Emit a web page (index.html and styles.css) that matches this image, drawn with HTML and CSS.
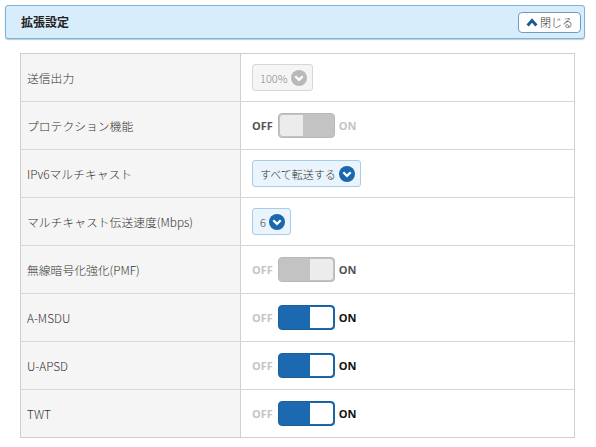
FILE: index.html
```html
<!DOCTYPE html>
<html lang="ja">
<head>
<meta charset="utf-8">
<title>拡張設定</title>
<link rel="stylesheet" href="styles.css">
</head>
<body>
<div class="header">
  <h1 class="title">拡張設定</h1>
  <button class="close-btn" type="button">
    <svg class="close-icon" width="12" height="9" viewBox="0 0 12 9"><polyline points="1.6,7.6 6,2.6 10.4,7.6" fill="none" stroke="#1e5a92" stroke-width="3" stroke-linejoin="miter"/></svg>
    <span>閉じる</span>
  </button>
</div>

<div class="settings">
  <div class="row">
    <div class="label">送信出力</div>
    <div class="value">
      <div class="select disabled"><span>100%</span>
        <svg class="chev" width="16" height="16" viewBox="0 0 16 16"><circle cx="8" cy="8" r="8" fill="#b9b9b9"/><polyline points="4.3,6.3 8,9.9 11.7,6.3" fill="none" stroke="#fff" stroke-width="2.3"/></svg>
      </div>
    </div>
  </div>
  <div class="row">
    <div class="label">プロテクション機能</div>
    <div class="value">
      <span class="tog-label strong">OFF</span>
      <div class="toggle off disabled"><span class="knob"></span></div>
      <span class="tog-label faint">ON</span>
    </div>
  </div>
  <div class="row">
    <div class="label">IPv6マルチキャスト</div>
    <div class="value">
      <div class="select"><span>すべて転送する</span>
        <svg class="chev" width="16" height="16" viewBox="0 0 16 16"><circle cx="8" cy="8" r="8" fill="#1b67ad"/><polyline points="4.3,6.3 8,9.9 11.7,6.3" fill="none" stroke="#fff" stroke-width="2.3"/></svg>
      </div>
    </div>
  </div>
  <div class="row">
    <div class="label">マルチキャスト伝送速度(Mbps)</div>
    <div class="value">
      <div class="select"><span>6</span>
        <svg class="chev" width="16" height="16" viewBox="0 0 16 16"><circle cx="8" cy="8" r="8" fill="#1b67ad"/><polyline points="4.3,6.3 8,9.9 11.7,6.3" fill="none" stroke="#fff" stroke-width="2.3"/></svg>
      </div>
    </div>
  </div>
  <div class="row">
    <div class="label">無線暗号化強化(PMF)</div>
    <div class="value">
      <span class="tog-label faint">OFF</span>
      <div class="toggle on disabled"><span class="knob"></span></div>
      <span class="tog-label strong">ON</span>
    </div>
  </div>
  <div class="row">
    <div class="label">A-MSDU</div>
    <div class="value">
      <span class="tog-label faint">OFF</span>
      <div class="toggle on"><span class="knob"></span></div>
      <span class="tog-label dark">ON</span>
    </div>
  </div>
  <div class="row">
    <div class="label">U-APSD</div>
    <div class="value">
      <span class="tog-label faint">OFF</span>
      <div class="toggle on"><span class="knob"></span></div>
      <span class="tog-label dark">ON</span>
    </div>
  </div>
  <div class="row">
    <div class="label">TWT</div>
    <div class="value">
      <span class="tog-label faint">OFF</span>
      <div class="toggle on"><span class="knob"></span></div>
      <span class="tog-label dark">ON</span>
    </div>
  </div>
</div>
</body>
</html>
```

FILE: styles.css
```css
* { box-sizing: border-box; }
html, body { margin: 0; padding: 0; background: #fff; }
body {
  font-family: "Noto Sans CJK JP", "Open Sans", sans-serif;
  font-size: 12px;
  color: #333;
  padding: 5px 11px 0 5px;
}

.header {
  height: 34px;
  background: #d8edfb;
  border: 1px solid #7fb3da;
  border-radius: 3px;
  box-shadow: 0 1px 1px rgba(60,110,160,0.35);
  display: flex;
  align-items: center;
  justify-content: space-between;
  padding: 0 3px 0 15px;
}
.title {
  margin: 0;
  font-size: 12px;
  font-weight: bold;
  color: #222;
  line-height: 1;
}
.close-btn {
  height: 21px;
  width: 63px;
  background: #fff;
  border: 1px solid #6d9dc4;
  border-radius: 4px;
  display: flex;
  align-items: center;
  justify-content: center;
  gap: 2px;
  padding: 0;
  font-family: "Noto Sans CJK JP", sans-serif;
  font-size: 11px;
  font-weight: 300;
  color: #333;
}
.close-icon { display: block; }

.settings {
  margin: 14px 0 0 15px;
  width: 555px;
  border: 1px solid #cfcfcf;
}
.row {
  display: grid;
  grid-template-columns: 220px 1fr;
  height: 48px;
  border-top: 1px solid #d6d6d6;
}
.row:first-child { border-top: 0; height: 47px; }
.label {
  background: #f5f5f5;
  border-right: 1px solid #cfcfcf;
  display: flex;
  align-items: center;
  padding-left: 6px;
  color: #333;
  font-weight: 300;
  font-size: 11.8px;
}
.value {
  display: flex;
  align-items: center;
  padding-left: 11px;
}

.select {
  height: 27px;
  display: flex;
  align-items: center;
  gap: 3px;
  padding: 0 5px 0 7px;
  border: 1px solid #a9cde8;
  border-radius: 3px;
  background: #e9f4fc;
  color: #333;
  font-size: 11px;
  font-weight: 300;
}
.select.disabled {
  background: #f5f5f5;
  border-color: #d6d6d6;
  color: #8a8a8a;
}
.chev { display: block; }

.tog-label {
  font-family: "Open Sans", "Liberation Sans", sans-serif;
  font-weight: bold;
  font-size: 11px;
}
.tog-label.strong { color: #555; }
.tog-label.dark { color: #111; }
.tog-label.faint { color: #c4c4c4; }

.toggle {
  width: 57px;
  height: 25px;
  margin: 0 4px 0 5px;
  border-radius: 4px;
  border: 1px solid #1d5e9c;
  background: #1b6ab1;
  display: flex;
  justify-content: flex-end;
  padding: 1px;
}
.toggle .knob {
  width: 23px;
  height: 100%;
  background: #fff;
  border-radius: 0 3px 3px 0;
}
.toggle.off { justify-content: flex-start; }
.toggle.off .knob { border-radius: 3px 0 0 3px; }
.toggle.disabled {
  background: #c3c3c3;
  border-color: #b8b8b8;
}
.toggle.disabled .knob { background: #ececec; }
```
